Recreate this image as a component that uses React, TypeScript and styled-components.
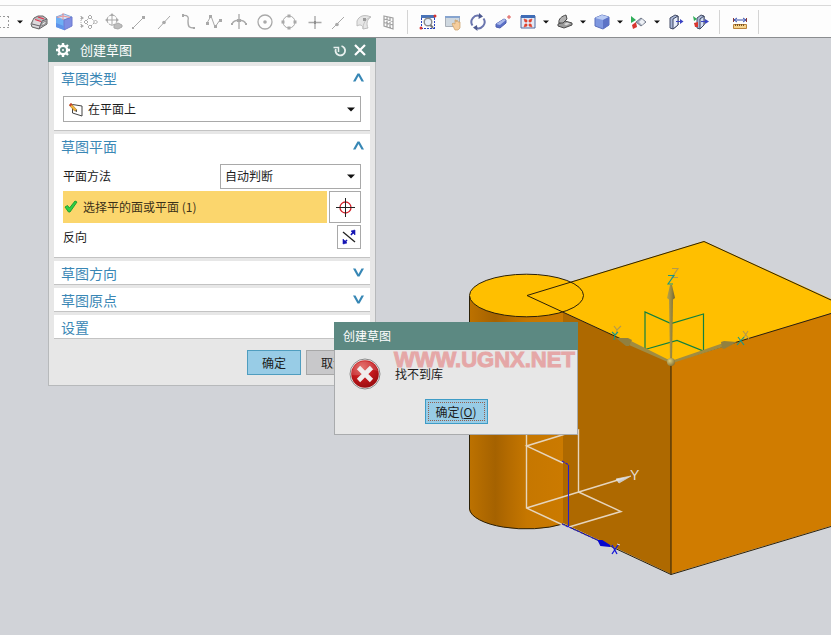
import React, { ReactNode } from "react";
import styled, { createGlobalStyle } from "styled-components";

const GlobalStyle = createGlobalStyle`
  *, *::before, *::after { box-sizing: border-box; }
  body {
    margin: 0;
    background: #d1d3d8;
    font-family: "Noto Sans CJK SC", "Noto Sans", sans-serif;
    font-size: 12px;
    color: #1c1c1c;
  }
  button, select { font: inherit; color: inherit; margin: 0; padding: 0; }
`;

const teal = "#5c8982";

const Page = styled.div`
  display: flex;
  flex-direction: column;
  min-height: 100vh;
`;

/* ---------- toolbar ---------- */

const RibbonEdge = styled.div`
  height: 6px;
  background: #fdfdfd;
  border-bottom: 1px solid #d9d9d9;
  overflow: hidden;
`;

const Toolbar = styled.div`
  display: flex;
  align-items: center;
  height: 32px;
  background: #fdfdfd;
  border-bottom: 1px solid #8b8d90;
  overflow: hidden;
`;

const ToolButton = styled.button<{ $edge?: boolean }>`
  flex: none;
  display: flex;
  align-items: center;
  justify-content: ${(p) => (p.$edge ? "flex-end" : "center")};
  width: ${(p) => (p.$edge ? "10px" : "25px")};
  height: 25px;
  border: 0;
  background: transparent;
  overflow: hidden;

  svg { flex: none; }
`;

const CaretButton = styled.button<{ $wide?: boolean }>`
  flex: none;
  display: flex;
  align-items: center;
  justify-content: center;
  width: ${(p) => (p.$wide ? "16px" : "12px")};
  padding-left: ${(p) => (p.$wide ? "4px" : "0")};
  height: 25px;
  border: 0;
  background: transparent;
`;

const Separator = styled.span`
  flex: none;
  width: 1px;
  height: 24px;
  margin: 0 7px 0 6px;
  background: #d4d4d4;
`;

const Caret = ({ w = 6 }: { w?: number }) => (
  <svg width={w} height={w / 2 + 1} viewBox="0 0 8 5" preserveAspectRatio="none" aria-hidden="true">
    <path d="M0 0.5H8L4 4.5Z" fill="#111" />
  </svg>
);

const Icon = ({ children }: { children: ReactNode }) => (
  <svg width="18" height="18" viewBox="0 0 18 18" fill="none" aria-hidden="true">
    {children}
  </svg>
);

const g = "#a9a9a9";

const sketchTools: { label: string; art: ReactNode }[] = [
  {
    label: "面",
    art: (
      <>
        <path d="M1 11L4 5L8 3H13L17 6V11L9 16L2 14Z" fill="#bdb9bd" stroke="#666" />
        <path d="M4 6L12 8L9 15L2 13Z" fill="#dcd9dc" />
        <path d="M12 8L17 6M12 8L9 16M2 11L10 13" stroke="#66646a" />
        <path d="M5 6.5L11 8.5M8 4L14 6" stroke="#e0324a" strokeWidth="1.3" />
        <path d="M12 10L16 8V10L12 13Z" fill="#eee" stroke="#777" strokeWidth="0.8" />
      </>
    ),
  },
  {
    label: "实体",
    art: (
      <>
        <path d="M1 4L9 1L17 4L9 7Z" fill="#d0e4fa" stroke="#8aa9d8" />
        <path d="M1 4L9 7V17L1 14Z" fill="#6eb0f5" />
        <path d="M9 7L17 4V13L9 17Z" fill="#7f8ee2" stroke="#6f7bd0" />
        <path d="M1 10L9 13V17L1 14Z" fill="#5f93ea" />
        <path d="M8 0V7M2 4.5L8 3L15 4.5" stroke="#ee8a8a" strokeWidth="0.9" />
      </>
    ),
  },
  {
    label: "移动点",
    art: (
      <>
        <path d="M5 9L10 4L15 9L10 14Z" stroke={g} strokeDasharray="2 1" />
        <path d="M10 2L12 4L10 6L8 4ZM15.500 7L17.500 9L15.500 11L13.500 9ZM6 7L8 9L6 11L4 9ZM10 12L12 14L10 16L8 14Z" fill="#fff" stroke={g} />
        <path d="M1 3L4 5L1 7ZM1 11L4 13L1 15Z" fill={g} />
        <path d="M1 3V15" stroke={g} strokeDasharray="1 1" />
      </>
    ),
  },
  {
    label: "移动对象",
    art: (
      <>
        <circle cx="7" cy="7" r="5" stroke={g} strokeDasharray="3 1" />
        <path d="M7 1V13M1 7H13" stroke={g} />
        <path d="M5 3L7 0L9 3ZM3 5L0 7L3 9ZM11 5L14 7L11 9Z" fill={g} />
        <path d="M9 12L13 10L17 12V14L13 16L9 15Z" fill="#bdbdbd" stroke={g} />
      </>
    ),
  },
  { label: "直线", art: (<><path d="M3 15L14 4" stroke={g} /><path d="M12 3H15V6H12ZM2 14H4V16H2Z" fill={g} /></>) },
  { label: "中点", art: (<><path d="M3 16L15 3" stroke={g} /><circle cx="9" cy="9.5" r="1.8" fill={g} /></>) },
  { label: "样条", art: (<><path d="M3 2.500C8 2 9 4 8 8C8 14 9 15 14 15" stroke={g} strokeWidth="1.4" /><path d="M2 1H4V4H2ZM13 14H15V16H13Z" fill={g} /></>) },
  {
    label: "折线",
    art: (
      <>
        <path d="M2 10L6 3L10 14L15 7" stroke={g} />
        <path d="M1 9H4V12H1ZM4 2H7V5H4ZM9 12H12V15H9ZM14 6H17V9H14Z" fill={g} />
      </>
    ),
  },
  { label: "交点", art: (<><path d="M9 1V16M2 11C4 6 14 6 16 11" stroke={g} strokeWidth="1.3" /><path d="M7 6H11V9H7Z" fill={g} /><path d="M1 10H3V12H1ZM15 10H17V12H15Z" fill={g} /></>) },
  { label: "圆心", art: (<><circle cx="10" cy="9" r="7" stroke={g} strokeWidth="1.3" /><circle cx="10" cy="9" r="1.8" fill={g} /></>) },
  {
    label: "象限点",
    art: (
      <>
        <circle cx="9" cy="9" r="6" stroke={g} />
        <path d="M7.500 1.500H10.500V4.500H7.500ZM7.500 13.500H10.500V16.500H7.500ZM1.500 7.500H4.500V10.500H1.500ZM13.500 7.500H16.500V10.500H13.500Z" fill={g} />
      </>
    ),
  },
  { label: "点", art: (<><path d="M10 3V16M3.500 9.500H16.500" stroke={g} strokeWidth="1.4" /><path d="M9 8H11V11H9Z" fill="#8f8f8f" /></>) },
  { label: "线上点", art: (<><path d="M2 16L14 4" stroke={g} /><circle cx="7" cy="11.500" r="1.8" fill={g} /></>) },
  {
    label: "面上点",
    art: (
      <>
        <path d="M2 8C4 3 9 1 16 4C12 6 11 11 13 15L8 16C8 12 5 11 2 13Z" fill="#e6e6e6" stroke="#bdbdbd" />
        <path d="M8 16C8 11 10 6 16 4" stroke="#c4c4c4" />
        <path d="M8 5H11V8H8Z" fill="#9a9a9a" />
      </>
    ),
  },
  { label: "栅格", art: <path d="M4 3L13 5V16L4 13ZM7 4V14M10 4.500V15M4 6L13 8.500M4 9.500L13 12" stroke="#a0a0a0" strokeWidth="1.2" /> },
];

const BlueBox = () => (
  <>
    <path d="M2 5L9 2L16 4V12L10 16L2 13Z" fill="#7e97df" stroke="#5b70bd" />
    <path d="M2 5L9 2L16 4L10 7Z" fill="#b9cbf3" />
    <path d="M10 7L16 4V12L10 16Z" fill="#5d73c6" />
  </>
);

const viewTools: { label: string; menu?: boolean; art: ReactNode }[] = [
  {
    label: "缩放窗口",
    art: (
      <>
        <path d="M2 2H16V5H2Z" fill="#4a74b8" />
        <path d="M2.500 5V15M15.500 5V15M2 15.500H16" stroke="#2743c0" strokeDasharray="2 1" />
        <circle cx="9" cy="9" r="3.8" fill="#e9f0f8" stroke="#8a8a8a" strokeWidth="1.4" />
        <path d="M11.500 12L14 15" stroke="#777" strokeWidth="2" />
        <circle cx="16" cy="3" r="1.5" fill="#d6332f" /><circle cx="2" cy="15" r="1.5" fill="#d6332f" />
      </>
    ),
  },
  {
    label: "平移",
    art: (
      <>
        <path d="M1.500 3.500H15.500V13.500H1.500Z" fill="#cfd8e0" stroke="#a8aeb7" />
        <path d="M1 3H16V5H1Z" fill="#86a4cf" />
        <path d="M8 11L9 10L11 11V7H12V9L13 7L14 9L16 9V15L14 17H11Z" fill="#f5cd9d" stroke="#c99d66" strokeWidth="0.7" />
      </>
    ),
  },
  {
    label: "旋转",
    art: (
      <>
        <path d="M3.500 12.500A6.300 6.300 0 0 1 11 3.100M14.500 5.500A6.300 6.300 0 0 1 7 14.900" stroke="#6a75ae" strokeWidth="2" />
        <path d="M10 0L14 3.500L9.500 6ZM8 12L4 14.500L8.500 18Z" fill="#4d598f" />
      </>
    ),
  },
  {
    label: "透视",
    art: (
      <>
        <path d="M2 11L10 6L12 7V10L6 15L2 14Z" fill="#5b70c8" stroke="#4c5eae" />
        <path d="M2 11L10 6L12 7L6 12Z" fill="#aab9ea" />
        <path d="M15 2V6M13 4H17" stroke="#dd5551" />
      </>
    ),
  },
  {
    label: "适合窗口",
    menu: true,
    art: (
      <>
        <path d="M2 3H16V15H2Z" fill="#e4e9f5" stroke="#51689e" />
        <path d="M2 2H16V5H2Z" fill="#3f6cb6" />
        <path d="M5 6L8 7V9H6ZM13 6L10 7V9H12ZM5 14L8 13V11H6ZM13 14L10 13V11H12Z" fill="#e0452f" stroke="#e0452f" strokeWidth="0.6" />
      </>
    ),
  },
  {
    label: "视图方向",
    menu: true,
    art: (
      <>
        <path d="M2 11L9 8L16 10V12L8 15L2 13Z" fill="#999" stroke="#4a4a4a" />
        <path d="M3 10C2 6 6 3 10 2L11 6L7 10Z" fill="#b0b0b0" stroke="#4a4a4a" />
        <path d="M8 11L11 9.500L14 10.500L10 12.500Z" fill="#d6d6d6" />
      </>
    ),
  },
  { label: "着色", menu: true, art: <BlueBox /> },
  {
    label: "显示对象",
    menu: true,
    art: (
      <>
        <path d="M1 3L6 7L1 10Z" fill="#2fae59" /><path d="M2 12L6 9L7 14L3 16Z" fill="#d8362f" />
        <path d="M6 9L11 5L16 9L11 13Z" fill="#a5adbd" stroke="#737a8a" />
        <path d="M9 9L12 6L15 9L12 12Z" fill="#eef1f6" />
      </>
    ),
  },
  {
    label: "剖切",
    art: (
      <>
        <path d="M3 5L8 2L11 3V12L6 16L3 15Z" fill="#a9b6d6" stroke="#444d66" />
        <path d="M6 6L11 3V12L6 16Z" fill="#e8eefb" stroke="#3d4763" />
        <path d="M9 8.500H15" stroke="#3a43c4" /><path d="M13 6L16.500 8.500L13 11Z" fill="#3a43c4" />
      </>
    ),
  },
  {
    label: "编辑截面",
    art: (
      <>
        <path d="M5 5L9 2L12 3V12L8 16L5 15Z" fill="#a9b6d6" stroke="#444d66" />
        <path d="M8 6L12 3V12L8 16Z" fill="#d4def3" stroke="#3d4763" />
        <path d="M1 3L5 6L2 8Z" fill="#2fae59" /><path d="M2 10L6 9L6 14L3 14Z" fill="#d8362f" />
        <path d="M9 8.500H15" stroke="#3a43c4" /><path d="M13 6L17 8.500L13 11Z" fill="#3a43c4" />
      </>
    ),
  },
];

/* ---------- workspace ---------- */

const Workspace = styled.main`
  position: relative;
  flex: 1;
  min-height: 400px;
  overflow: hidden;
`;

const Scene = styled.svg`
  position: absolute;
  inset: 0;
  width: 100%;
  height: 100%;
`;

const AxisLabel = styled.text`
  font-family: "Liberation Sans", sans-serif;
  font-size: 14px;
`;

const ModelScene = () => (
  <Scene viewBox="0 38 831 597" preserveAspectRatio="xMidYMid slice" role="img" aria-label="模型">
    <defs>
      <linearGradient id="cyl" x1="469" x2="563" y1="0" y2="0" gradientUnits="userSpaceOnUse">
        <stop offset="0" stopColor="#bd7200" />
        <stop offset="0.28" stopColor="#a56200" />
        <stop offset="0.42" stopColor="#b46b00" />
        <stop offset="0.62" stopColor="#c67700" />
        <stop offset="1" stopColor="#cb7a00" />
      </linearGradient>
      <linearGradient id="shaft" x1="667" x2="675" y1="0" y2="0" gradientUnits="userSpaceOnUse">
        <stop offset="0" stopColor="#b9a445" />
        <stop offset="0.5" stopColor="#9c8a44" />
        <stop offset="1" stopColor="#71642f" />
      </linearGradient>
      <linearGradient id="whiteCone" x1="622" x2="625" y1="476" y2="484" gradientUnits="userSpaceOnUse">
        <stop offset="0" stopColor="#ffffff" />
        <stop offset="1" stopColor="#8e8e8e" />
      </linearGradient>
      <radialGradient id="ball" cx="0.35" cy="0.35" r="0.7">
        <stop offset="0" stopColor="#e0cf7a" />
        <stop offset="1" stopColor="#85743a" />
      </radialGradient>
    </defs>
    <path d="M469 296V508A57 21 0 0 0 563 524V296Z" fill="url(#cyl)" />
    <path d="M563 312L671 362V574L563 523Z" fill="#ae6900" />
    <path d="M527 295L704 241L991 372V264L671 362Z" fill="#ffbf00" />
    <path d="M671 362L991 264V478L671 574Z" fill="#d07c00" />
    <ellipse cx="526.5" cy="295.5" rx="57" ry="21.3" fill="#ffbf00" />
    <g fill="none" stroke="#2b2008" strokeWidth="1">
      <ellipse cx="526.5" cy="295.5" rx="57" ry="21.3" />
      <path d="M831 300L704 241.500L527 295.500L671 362L831 313.500M671 362V574.500M469.500 296V509" />
      <path d="M469.500 509A57 21 0 0 0 563 524L671 574.500L831 526.500" />
    </g>

    <path
      d="M645 349V312L671 323.500L703.500 314V351L677 340.500L645 349.500"
      fill="none"
      stroke="#0f8040"
      strokeWidth="1.2"
    />
    <path d="M670 362L669 299H673L672 362Z" fill="url(#shaft)" />
    <path d="M667 298L670 285H672L675 298Q671 302 667 298Z" fill="url(#shaft)" />
    <path d="M671 361L722 343.500L723 347L671 363.500Z" fill="#a08c42" />
    <path d="M721 342L724 341L737 342L724 349L722 348Z" fill="#91803f" />
    <path d="M671 361L631 341L629 345L671 363.500Z" fill="#a08c42" />
    <path d="M632 340L628 338H616L626 346L629 346Z" fill="#91803f" />
    <circle cx="671" cy="362" r="4" fill="url(#ball)" />
    <g fill="none" strokeWidth="1.1">
      <path d="M672 268.500H678L672 277.500H678M743 331L749 339M748 331L743 339M614 326L617 330L621 326M617 330L616 335" stroke="#b3994e" />
      <path d="M668 275.500H674L668 284H673M738 337L744 345M744 337L737 345M612 332L615 335L618 332M615 335L614 340" stroke="#15988b" />
    </g>

    <g fill="none" stroke="#e6d5bd" strokeWidth="1.4">
      <path d="M563 463L526.500 446L578.500 430V492M526.500 430V508L563 525M526.500 508L618 480M578.500 492L621 511.500L569 527" />
    </g>
    <path d="M616 479L631 476L619 483Z" fill="url(#whiteCone)" stroke="#ddd" strokeWidth="0.7" />
    <AxisLabel x="630" y="480" fill="#e3ddd5">Y</AxisLabel>
    <g fill="none" stroke="#2a1fc8" strokeWidth="1.1">
      <path d="M568.500 465V527" />
      <path d="M562 461L569 465M562 524L604 543" strokeDasharray="3 1" />
    </g>
    <path d="M599 541L602 541L610 546L601 545Z" fill="#0707cf" stroke="#0707cf" strokeWidth="2" />
    <path d="M617 544L620 545" stroke="#d8d8e8" />
    <path d="M612 545L617 554M618 545L612 554" stroke="#1616d8" strokeWidth="1.3" />
  </Scene>
);

/* ---------- sketch window ---------- */

const SketchWindow = styled.form`
  position: absolute;
  left: 48px;
  top: 0;
  width: 328px;
  background: #e7e7e7;
  border: 1px solid #b7b9bb;
  border-top: 0;
`;

const TitleBar = styled.header`
  display: flex;
  align-items: center;
  height: 24px;
  margin: 0 -1px;
  padding: 0 6px 0 7px;
  background: ${teal};
  color: #fff;
`;

const Title = styled.h1`
  flex: 1;
  margin: 0 0 0 9px;
  font-size: 13px;
  line-height: 24px;
  font-weight: 400;
`;

const TitleButton = styled.button`
  display: flex;
  align-items: center;
  justify-content: center;
  width: 20px;
  height: 20px;
  border: 0;
  background: transparent;
`;

const Groups = styled.div`
  display: flex;
  flex-direction: column;
  gap: 3px;
  padding: 4px 5px 0;
`;

const Group = styled.section`
  background: #fff;
  border-bottom: 1px solid #c3c3c3;
`;

const GroupToggle = styled.button`
  display: flex;
  align-items: center;
  justify-content: space-between;
  width: 100%;
  height: 23px;
  padding: 0 6px 0 7px;
  border: 0;
  background: transparent;
  color: #3a87b5;
  font-size: 14px;
  line-height: 22px;
`;

const GroupBody = styled.div`
  display: flex;
  flex-direction: column;
  gap: 2px;
  padding: 7px 9px 8px;
`;

const Row = styled.div`
  display: flex;
  align-items: stretch;
  justify-content: space-between;
  gap: 2px;
`;

const RowLabel = styled.label`
  flex: 1;
  line-height: 23px;
`;

const SelectBox = styled.div<{ $wide?: boolean }>`
  position: relative;
  width: ${(p) => (p.$wide ? "100%" : "141px")};
  height: ${(p) => (p.$wide ? "26px" : "25px")};
`;

const Select = styled.select<{ $icon?: boolean }>`
  appearance: none;
  display: block;
  width: 100%;
  height: 100%;
  padding: 0 20px 2px ${(p) => (p.$icon ? "24px" : "4px")};
  border: 1px solid #a9a9a9;
  border-radius: 0;
  background: #fff;
`;

const SelectMark = styled.span<{ $left?: boolean }>`
  position: absolute;
  top: 0;
  bottom: 0;
  ${(p) => (p.$left ? "left: 5px;" : "right: 6px;")}
  display: flex;
  align-items: center;
  pointer-events: none;
`;

const Selection = styled.div`
  flex: 1;
  display: flex;
  align-items: center;
  gap: 5px;
  padding: 0 2px 2px 1px;
  background: #fbd66d;
  color: #3b3119;
`;

const SquareButton = styled.button<{ $large?: boolean }>`
  display: flex;
  align-items: center;
  justify-content: center;
  width: ${(p) => (p.$large ? "32px" : "24px")};
  height: ${(p) => (p.$large ? "32px" : "24px")};
  border: 1px solid #a9a9a9;
  background: #fff;
`;

const Actions = styled.footer`
  display: flex;
  justify-content: flex-end;
  gap: 5px;
  padding: 11px 15px 10px;
`;

const ActionButton = styled.button<{ $primary?: boolean }>`
  width: 54px;
  height: 25px;
  border: 1px solid ${(p) => (p.$primary ? "#4f9dbf" : "#a7a7a7")};
  background: ${(p) => (p.$primary ? "#98cce6" : "#c8c8ca")};
`;

const Chevron = ({ up }: { up?: boolean }) => (
  <svg width="11" height="9" viewBox="0 0 11 9" aria-hidden="true">
    <path d={up ? "M0 8.500L4.500 0.500H6.500L11 8.500H8.500L5.500 3L2.500 8.500Z" : "M0 0.500L4.500 8.500H6.500L11 0.500H8.500L5.500 6L2.500 0.500Z"} fill="#3787b5" />
  </svg>
);

/* ---------- error window ---------- */

const ErrorWindow = styled.section`
  position: absolute;
  left: 334px;
  top: 284px;
  width: 244px;
  background: #e7e7e7;
  border: 1px solid #a9abad;
  border-top: 0;
`;

const ErrorTitle = styled.h2`
  margin: 0 -1px;
  padding: 0 9px;
  height: 28px;
  font-size: 12px;
  line-height: 27px;
  font-weight: 400;
  color: #fff;
  background: ${teal};
`;

const ErrorBody = styled.div`
  display: flex;
  align-items: center;
  gap: 14px;
  padding: 8px 14px 0;
`;

const Message = styled.p`
  margin: 0;
  line-height: 12px;
`;

const ErrorActions = styled.div`
  display: flex;
  justify-content: center;
  padding: 9px 0 10px;
`;

const ErrorButton = styled.button`
  width: 63px;
  height: 25px;
  border: 1px solid #3f9cc6;
  background: #98cce6;
  outline: 1px dotted #93604f;
  outline-offset: -4px;
`;

const Watermark = styled.div`
  position: absolute;
  left: 394px;
  top: 314px;
  font-family: "Liberation Sans", sans-serif;
  font-size: 22px;
  line-height: 16px;
  font-weight: 700;
  color: #e58d8d;
  opacity: 0.7;
  -webkit-text-stroke: 1px #e58d8d;
  pointer-events: none;
`;

export default function App() {
  return (
    <Page>
      <GlobalStyle />
      <RibbonEdge>
        <svg width="831" height="5" viewBox="0 0 831 5" fill="none" aria-hidden="true">
          <path d="M59 0V1M67 0H71M73 0V1M76 0H80M548 0H551M554 0V2M557 0H560M563 0V2L566 0" stroke="#356c94" />
          <path d="M443.500 0V1M691.500 0V1" stroke="#ccc" />
        </svg>
      </RibbonEdge>
      <Toolbar role="toolbar" aria-label="工具条">
        <ToolButton $edge type="button" aria-label="选择">
          <Icon>
            <path d="M3 3.500H17M3 14.500H17M16.500 3V15" stroke="#999" strokeDasharray="2 2" />
          </Icon>
        </ToolButton>
        <CaretButton $wide type="button" aria-label="选择选项"><Caret /></CaretButton>
        {sketchTools.map((t) => (
          <ToolButton key={t.label} type="button" aria-label={t.label}>
            <Icon>{t.art}</Icon>
          </ToolButton>
        ))}
        <Separator />
        {viewTools.map((t) => (
          <React.Fragment key={t.label}>
            <ToolButton type="button" aria-label={t.label}>
              <Icon>{t.art}</Icon>
            </ToolButton>
            {t.menu && <CaretButton type="button" aria-label={t.label + "选项"}><Caret /></CaretButton>}
          </React.Fragment>
        ))}
        <Separator />
        <ToolButton type="button" aria-label="测量距离">
          <Icon>
            <path d="M2.500 5V9M15.500 5V9" stroke="#8b3b3b" />
            <path d="M3 7H15M6 5L3 7L6 9M12 5L15 7L12 9" stroke="#374fae" />
            <path d="M2.500 11.500H15.500V15.500H2.500Z" fill="#f5d48e" stroke="#b9813a" />
            <path d="M4.500 11V13M6.500 11V13M8.500 11V13M10.500 11V13M12.500 11V13" stroke="#7c5525" />
          </Icon>
        </ToolButton>
        <Separator />
      </Toolbar>

      <Workspace>
        <ModelScene />

        <SketchWindow onSubmit={(e) => e.preventDefault()}>
          <TitleBar>
            <svg width="16" height="16" viewBox="0 0 16 16" fill="none" aria-hidden="true">
              <circle cx="8" cy="8" r="4.2" stroke="#fff" strokeWidth="2.4" />
              <path
                d="M8 1V3M8 13V15M1 8H3M13 8H15M3 3L4.500 4.500M11.500 11.500L13 13M13 3L11.500 4.500M4.500 11.500L3 13"
                stroke="#fff"
                strokeWidth="2.4"
              />
              <circle cx="8" cy="8" r="1" fill="#fff" />
            </svg>
            <Title>创建草图</Title>
            <TitleButton type="button" aria-label="重置">
              <svg width="14" height="14" viewBox="0 0 14 14" fill="none" aria-hidden="true">
                <path d="M8.500 3A4.800 4.800 0 1 1 2.800 6" stroke="#e8f0ee" strokeWidth="1.8" />
                <path d="M0.500 4.500H5.500V9" stroke="#e8f0ee" strokeWidth="1.5" />
              </svg>
            </TitleButton>
            <TitleButton type="button" aria-label="关闭">
              <svg width="12" height="12" viewBox="0 0 12 12" fill="none" aria-hidden="true">
                <path d="M1 1L11 11M11 1L1 11" stroke="#fff" strokeWidth="2.2" />
              </svg>
            </TitleButton>
          </TitleBar>

          <Groups>
            <Group>
              <GroupToggle type="button" aria-expanded="true">草图类型<Chevron up /></GroupToggle>
              <GroupBody>
                <SelectBox $wide>
                  <Select $icon aria-label="草图类型" defaultValue="plane">
                    <option value="plane">在平面上</option>
                  </Select>
                  <SelectMark $left>
                    <svg width="16" height="16" viewBox="0 0 16 16" fill="none" aria-hidden="true">
                      <path d="M4.500 3.500L14 5V15L4.500 12Z" fill="#fff" stroke="#444" />
                      <path d="M3 2.500L9 9L6.500 10L1.500 4.500Z" fill="#f0b43c" stroke="#a8742a" strokeWidth="0.6" />
                      <path d="M1 4L3 2L4.500 3.500L2.200 5.500Z" fill="#c4422c" />
                      <path d="M9 9V11L7 10Z" fill="#2c2c2c" />
                    </svg>
                  </SelectMark>
                  <SelectMark><Caret w={8} /></SelectMark>
                </SelectBox>
              </GroupBody>
            </Group>

            <Group>
              <GroupToggle type="button" aria-expanded="true">草图平面<Chevron up /></GroupToggle>
              <GroupBody>
                <Row>
                  <RowLabel htmlFor="method">平面方法</RowLabel>
                  <SelectBox>
                    <Select id="method" defaultValue="auto">
                      <option value="auto">自动判断</option>
                    </Select>
                    <SelectMark><Caret w={8} /></SelectMark>
                  </SelectBox>
                </Row>
                <Row>
                  <Selection>
                    <svg width="14" height="14" viewBox="0 0 14 14" aria-hidden="true">
                      <path d="M1 8L3.500 6.500L5.500 9L11 2L13 3L6 13H4.500Z" fill="#2fd044" stroke="#179a2c" strokeWidth="0.9" />
                    </svg>
                    选择平的面或平面 (1)
                  </Selection>
                  <SquareButton $large type="button" aria-label="指定点">
                    <svg width="19" height="19" viewBox="0 0 19 19" fill="none" aria-hidden="true">
                      <circle cx="9.5" cy="9.5" r="5.5" stroke="#d3222a" strokeWidth="1.3" />
                      <path d="M9.500 0V19M0 9.500H19" stroke="#222" />
                    </svg>
                  </SquareButton>
                </Row>
                <Row>
                  <RowLabel htmlFor="reverse">反向</RowLabel>
                  <SquareButton id="reverse" type="button" aria-label="反向">
                    <svg width="16" height="16" viewBox="0 0 16 16" fill="none" aria-hidden="true">
                      <path d="M2 3L14 13" stroke="#222" strokeWidth="1.3" />
                      <path d="M3 14L6 11M10 6L13 2" stroke="#1414b4" strokeWidth="1.6" />
                      <path d="M14 1V6L10 2ZM2 15V10L6 14Z" fill="#1414b4" stroke="#1414b4" strokeWidth="0.6" />
                    </svg>
                  </SquareButton>
                </Row>
              </GroupBody>
            </Group>

            <Group><GroupToggle type="button" aria-expanded="false">草图方向<Chevron /></GroupToggle></Group>
            <Group><GroupToggle type="button" aria-expanded="false">草图原点<Chevron /></GroupToggle></Group>
            <Group><GroupToggle type="button" aria-expanded="false">设置<Chevron /></GroupToggle></Group>
          </Groups>

          <Actions>
            <ActionButton $primary type="submit">确定</ActionButton>
            <ActionButton type="button">取消</ActionButton>
          </Actions>
        </SketchWindow>

        <ErrorWindow role="alertdialog" aria-labelledby="error-title">
          <ErrorTitle id="error-title">创建草图</ErrorTitle>
          <ErrorBody>
            <svg width="32" height="32" viewBox="0 0 32 32" fill="none" aria-hidden="true">
              <defs>
                <radialGradient id="err" cx="0.4" cy="0.25" r="0.85">
                  <stop offset="0" stopColor="#e05a55" />
                  <stop offset="0.5" stopColor="#c3181c" />
                  <stop offset="1" stopColor="#8d0a0d" />
                </radialGradient>
              </defs>
              <circle cx="16" cy="16" r="15" fill="#f0f0f0" stroke="#8a8a8a" />
              <circle cx="16" cy="16" r="13.8" fill="url(#err)" />
              <path d="M3 13A13.500 13.500 0 0 1 29 13Q20 10 14 16Q8 18 3 17Z" fill="#fff" opacity="0.15" />
              <path d="M9.500 9.500L22.500 22.500M22.500 9.500L9.500 22.500" stroke="#f0ecec" strokeWidth="4.6" />
            </svg>
            <Message>找不到库</Message>
          </ErrorBody>
          <ErrorActions>
            <ErrorButton type="button">确定(<u>O</u>)</ErrorButton>
          </ErrorActions>
        </ErrorWindow>

        <Watermark aria-hidden="true">WWW.UGNX.NET</Watermark>
      </Workspace>
    </Page>
  );
}
